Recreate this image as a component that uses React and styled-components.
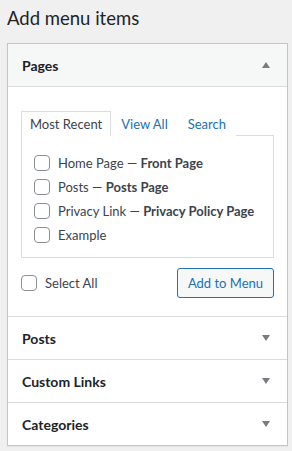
import React from "react";
import styled, { createGlobalStyle } from "styled-components";

const Global = createGlobalStyle`
  html, body {
    margin: 0;
    background: #f0f0f1;
    font-family: Lato, "Liberation Sans", Arial, sans-serif;
    color: #3c434a;
  }
`;

const Page = styled.div`
  width: 292px;
  height: 451px;
  padding: 5px 4px 0 7px;
  box-sizing: border-box;
`;

const Heading = styled.h2`
  margin: 0 0 12px 0;
  font-size: 18.5px;
  font-weight: 400;
  line-height: 26px;
  color: #1d2327;
`;

const Box = styled.div`
  background: #fff;
  border: 1px solid #c3c4c7;
  box-shadow: 0 1px 1px rgba(0, 0, 0, 0.04);
`;

const Section = styled.div`
  & + & {
    border-top: 1px solid #dcdcde;
  }
`;

const SectionHead = styled.div`
  height: 42px;
  display: flex;
  align-items: center;
  justify-content: space-between;
  padding: 0 17px 0 14px;
  background: ${(p) => (p.$open ? "#f6f7f7" : "#fff")};
  border-bottom: ${(p) => (p.$open ? "1px solid #dcdcde" : "none")};
  font-size: 14px;
  font-weight: 700;
  color: #1d2327;
`;

const Arrow = styled.span`
  width: 0;
  height: 0;
  border-left: 4px solid transparent;
  border-right: 4px solid transparent;
  ${(p) =>
    p.$up
      ? "border-bottom: 6px solid #787c82;"
      : "border-top: 6px solid #787c82;"}
`;

const Body = styled.div`
  padding: 24px 13px 0 13px;
`;

const Tabs = styled.ul`
  display: flex;
  margin: 0;
  padding: 0;
  list-style: none;
  font-size: 13px;
`;

const Tab = styled.li`
  height: 24px;
  line-height: 25px;
  padding: 0 ${(p) => (p.$active ? "8px" : "9px")};
  color: ${(p) => (p.$active ? "#3c434a" : "#2271b1")};
  border: 1px solid ${(p) => (p.$active ? "#dcdcde" : "transparent")};
  border-bottom: none;
  background: #fff;
  position: relative;
  margin-bottom: -1px;
  z-index: 1;
`;

const TabPanel = styled.div`
  border: 1px solid #dcdcde;
  padding: 15px 12px 10px 12px;
`;

const Item = styled.label`
  display: flex;
  align-items: center;
  gap: 8px;
  height: 24px;
  font-size: 13px;
  color: #3c434a;
  white-space: nowrap;
  b {
    font-weight: 700;
    color: #3c434a;
  }
`;

const Check = styled.span`
  width: 14px;
  height: 14px;
  border: 1px solid #8c8f94;
  border-radius: 4px;
  background: #fff;
  flex-shrink: 0;
`;

const Actions = styled.div`
  display: flex;
  align-items: center;
  justify-content: space-between;
  padding: 10px 0 18px 0;
`;

const Button = styled.button`
  height: 30px;
  padding: 0 10px;
  font-family: inherit;
  font-size: 13px;
  color: #2271b1;
  background: #f6f7f7;
  border: 1px solid #2271b1;
  border-radius: 3px;
`;

const items = [
  ["Home Page", "Front Page"],
  ["Posts", "Posts Page"],
  ["Privacy Link", "Privacy Policy Page"],
  ["Example", null],
];

export default function App() {
  return (
    <>
      <Global />
      <Page>
        <Heading>Add menu items</Heading>
        <Box>
          <Section>
            <SectionHead $open>
              Pages
              <Arrow $up />
            </SectionHead>
            <Body>
              <Tabs>
                <Tab $active>Most Recent</Tab>
                <Tab>View All</Tab>
                <Tab>Search</Tab>
              </Tabs>
              <TabPanel>
                {items.map(([name, state]) => (
                  <Item key={name}>
                    <Check />
                    <span>
                      {name}
                      {state && (
                        <>
                          {" — "}
                          <b>{state}</b>
                        </>
                      )}
                    </span>
                  </Item>
                ))}
              </TabPanel>
              <Actions>
                <Item>
                  <Check />
                  Select All
                </Item>
                <Button>Add to Menu</Button>
              </Actions>
            </Body>
          </Section>
          {["Posts", "Custom Links", "Categories"].map((s) => (
            <Section key={s}>
              <SectionHead>
                {s}
                <Arrow />
              </SectionHead>
            </Section>
          ))}
        </Box>
      </Page>
    </>
  );
}
